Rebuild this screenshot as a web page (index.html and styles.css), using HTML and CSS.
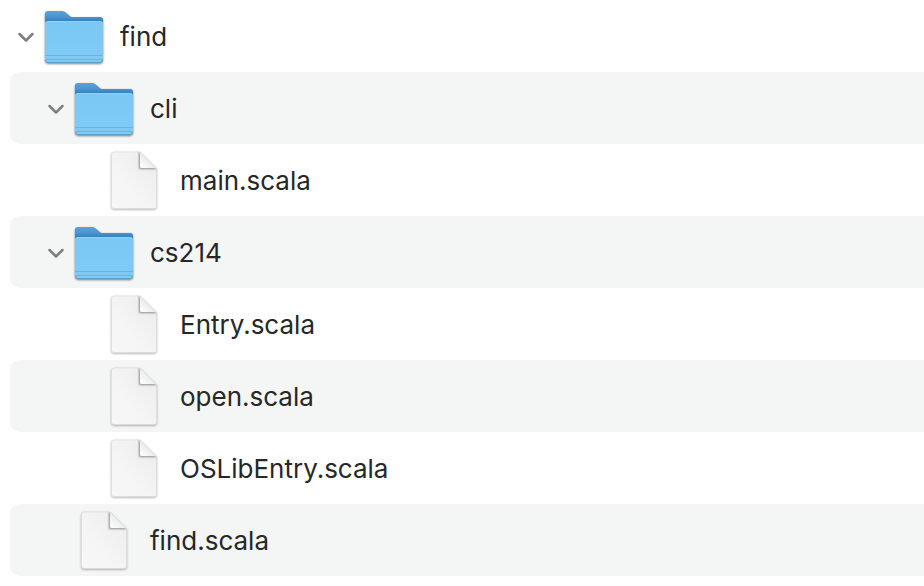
FILE: index.html
```
<!DOCTYPE html>
<html lang="en">

<head>
    <meta charset="UTF-8" />
    <meta name="viewport" content="width=device-width, initial-scale=1.0" />
    <title>find</title>
    <link rel="stylesheet" href="styles.css">
</head>

<body>
    <!-- Shared icons -->
    <svg class="sprite" aria-hidden="true">
        <defs>
            <linearGradient id="tab" gradientUnits="userSpaceOnUse" x1="0" y1="5" x2="0" y2="17">
                <stop offset="0" stop-color="#5ba3d6" />
                <stop offset="0.5" stop-color="#4a94d0" />
                <stop offset="1" stop-color="#2b74c0" />
            </linearGradient>
            <linearGradient id="front" x1="0" y1="0" x2="0" y2="1">
                <stop offset="0" stop-color="#7ac8f5" />
                <stop offset="1" stop-color="#80caf6" />
            </linearGradient>
            <linearGradient id="paper" x1="1" y1="0" x2="0" y2="1">
                <stop offset="0" stop-color="#ebebeb" />
                <stop offset="0.6" stop-color="#f5f5f5" />
                <stop offset="1" stop-color="#f7f7f7" />
            </linearGradient>
            <linearGradient id="fold" x1="0" y1="1" x2="1" y2="0">
                <stop offset="0" stop-color="#ffffff" />
                <stop offset="0.5" stop-color="#ececec" />
            </linearGradient>
            <clipPath id="sheet">
                <path d="M10 2H36L52.5 18.5V56A2.5 2.5 0 0 1 50 58.5H10A2.5 2.5 0 0 1 7.5 56V4.5A2.5 2.5 0 0 1 10 2Z" />
            </clipPath>
        </defs>
        <symbol id="chevron" viewBox="0 0 20 20">
            <path d="M3.500 8L10 14.500L16.500 8" fill="none" stroke="#7f7f7f" stroke-width="2.500" stroke-linecap="round" stroke-linejoin="round" />
        </symbol>
        <symbol id="folder" viewBox="0 0 60 60">
            <path d="M1 8A3 3 0 0 1 4 5H17.500C19.500 5 20.500 5.500 22 6.700L25.500 9.700C26.700 10.700 27.500 11 29 11H56A3 3 0 0 1 59 14V40H1Z" fill="url(#tab)" />
            <path d="M1 18A3 3 0 0 1 4 15H56A3 3 0 0 1 59 18V53.500A3 3 0 0 1 56 56.500H4A3 3 0 0 1 1 53.500Z" fill="url(#front)" />
            <path d="M1.500 17.500Q2 15.500 4 15.500H56Q58 15.500 58.500 17.500" fill="none" stroke="#8dd2f7" />
            <path d="M1 49.500H59" stroke="#68b4e2" />
            <path d="M1 53.500H59" stroke="#68b4e2" />
            <path d="M1.500 54Q2 56.500 4 56.500H56Q58 56.500 58.500 54" fill="none" stroke="#5a9fcb" />
        </symbol>
        <symbol id="document" viewBox="0 0 60 60">
            <path d="M10 2H36L52.500 18.500V56A2.500 2.500 0 0 1 50 58.500H10A2.500 2.500 0 0 1 7.500 56V4.500A2.500 2.500 0 0 1 10 2Z" fill="url(#paper)" stroke="#dedede" stroke-width="0.600" />
            <g clip-path="url(#sheet)">
                <path class="fold-shadow" d="M35 2V19H53L36 2Z" fill="#8c8c8c" />
            </g>
            <path d="M36 2L52.500 18H37.500A1.500 1.500 0 0 1 36 16.500Z" fill="url(#fold)" />
            <path d="M36 2L52.500 18.500" stroke="#dcdcdc" stroke-width="0.600" />
        </symbol>
    </svg>

    <ul class="file-list">
        <li class="row">
            <button class="toggle" type="button" aria-label="Collapse find" aria-expanded="true"><svg class="chevron"><use href="#chevron" /></svg></button>
            <svg class="icon"><use href="#folder" /></svg>
            <span class="name">find</span>
        </li>
        <li class="row level-1">
            <button class="toggle" type="button" aria-label="Collapse cli" aria-expanded="true"><svg class="chevron"><use href="#chevron" /></svg></button>
            <svg class="icon"><use href="#folder" /></svg>
            <span class="name">cli</span>
        </li>
        <li class="row file level-2">
            <svg class="icon"><use href="#document" /></svg>
            <span class="name">main.scala</span>
        </li>
        <li class="row level-1">
            <button class="toggle" type="button" aria-label="Collapse cs214" aria-expanded="true"><svg class="chevron"><use href="#chevron" /></svg></button>
            <svg class="icon"><use href="#folder" /></svg>
            <span class="name">cs214</span>
        </li>
        <li class="row file level-2">
            <svg class="icon"><use href="#document" /></svg>
            <span class="name">Entry.scala</span>
        </li>
        <li class="row file level-2">
            <svg class="icon"><use href="#document" /></svg>
            <span class="name">open.scala</span>
        </li>
        <li class="row file level-2">
            <svg class="icon"><use href="#document" /></svg>
            <span class="name">OSLibEntry.scala</span>
        </li>
        <li class="row file level-1">
            <svg class="icon"><use href="#document" /></svg>
            <span class="name">find.scala</span>
        </li>
    </ul>
</body>

</html>
```
FILE: styles.css
```
* {
    box-sizing: border-box;
    margin: 0;
    padding: 0;
}

body {
    font-family: 'Inter', sans-serif;
    background: #fff;
    color: #272727;
}

.sprite {
    display: block;
    width: 0;
    height: 0;
}

.file-list {
    list-style: none;
    padding-left: 10px;
}

.row {
    display: flex;
    align-items: center;
    height: 72px;
    padding-left: 6px;
    border-radius: 10px 0 0 10px;
}

.row:nth-child(even) {
    background: #f4f5f5;
}

.level-1 {
    padding-left: 36px;
}

.level-2 {
    padding-left: 66px;
}

.toggle {
    flex: none;
    width: 20px;
    height: 20px;
    margin-right: 8px;
    border: none;
    background: none;
    cursor: pointer;
}

.chevron {
    display: block;
    width: 20px;
    height: 20px;
}

.icon {
    flex: none;
    width: 60px;
    height: 60px;
    margin-right: 16px;
    overflow: visible;
    filter: drop-shadow(0 1px 1px rgba(0, 0, 0, 0.5));
}

/* files have no toggle, so keep its space free */
.file .icon {
    margin-left: 28px;
    filter: drop-shadow(0 1px 1px rgba(0, 0, 0, 0.3));
}

.fold-shadow {
    filter: blur(1px);
}

.name {
    padding-top: 2px;
    font-size: 26px;
    line-height: 32px;
    white-space: nowrap;
}
```
